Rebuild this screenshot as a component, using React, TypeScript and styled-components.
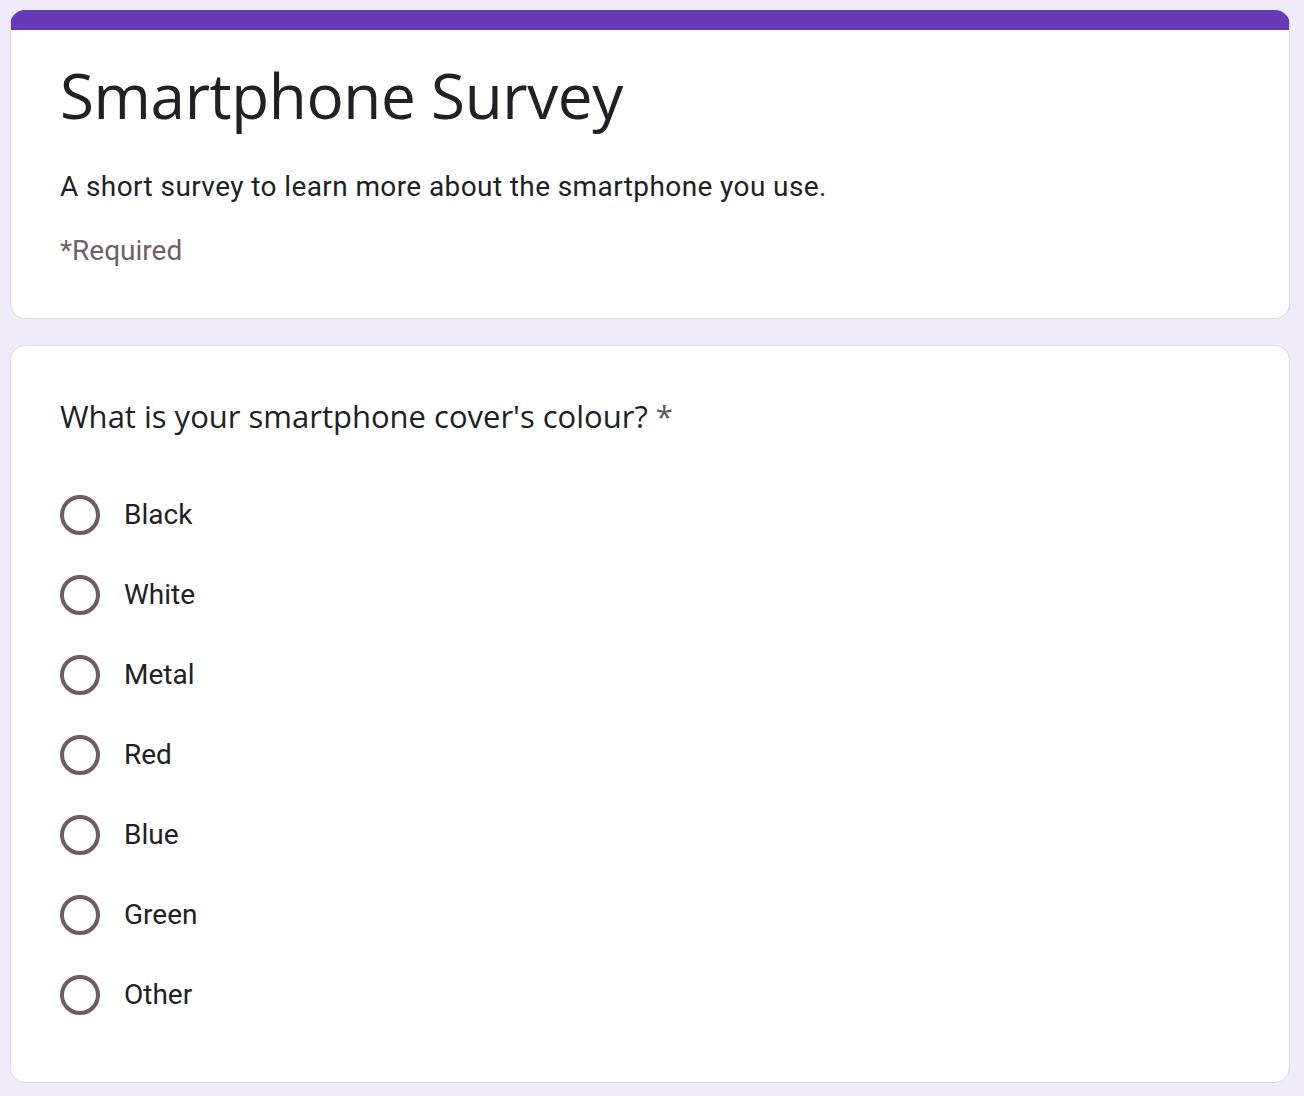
import React, { FC } from 'react';
import styled, { createGlobalStyle } from 'styled-components';

const GlobalStyle = createGlobalStyle`
    html, body {
        margin: 0;
        padding: 0;
        background: #f0ebf8;
    }
    body {
        font-family: Roboto, "Liberation Sans", sans-serif;
        color: #202124;
    }
`;

const options = ['Black', 'White', 'Metal', 'Red', 'Blue', 'Green', 'Other'];

const App: FC = () => {
    return (
        <>
            <GlobalStyle />
            <Page>
                <HeaderCard>
                    <Title>Smartphone Survey</Title>
                    <Description>A short survey to learn more about the smartphone you use.</Description>
                    <RequiredNote>*Required</RequiredNote>
                </HeaderCard>
                <QuestionCard>
                    <Question>
                        What is your smartphone cover's colour? <Star>*</Star>
                    </Question>
                    <Options>
                        {options.map((o) => (
                            <Option key={o}>
                                <Radio />
                                <OptionLabel>{o}</OptionLabel>
                            </Option>
                        ))}
                    </Options>
                </QuestionCard>
            </Page>
        </>
    );
};

export default App;

const Page = styled.div`
    padding: 10px 14px 12px 10px;
    display: flex;
    flex-direction: column;
    gap: 26px;
`;

const Card = styled.section`
    background: white;
    border: 1px solid #dadce0;
    border-radius: 15px;
    padding: 0 49px;
    box-sizing: border-box;
`;

const HeaderCard = styled(Card)`
    border-top: 20px solid #673ab7;
    height: 309px;
    padding-top: 25px;
`;

const Title = styled.h1`
    margin: 0;
    font-family: "Open Sans", Roboto, sans-serif;
    font-weight: 400;
    font-size: 62px;
    line-height: 80px;
    letter-spacing: -0.4px;
`;

const Description = styled.p`
    margin: 32px 0 0;
    font-size: 28px;
    line-height: 40px;
    letter-spacing: 0.4px;
`;

const RequiredNote = styled.div`
    margin-top: 24px;
    font-size: 28px;
    line-height: 40px;
    color: #70606a;
`;

const QuestionCard = styled(Card)`
    padding-top: 48px;
    padding-bottom: 48px;
    height: 738px;
`;

const Question = styled.h2`
    margin: 0;
    font-family: "Open Sans", Roboto, sans-serif;
    font-weight: 400;
    font-size: 31px;
    line-height: 44px;
`;

const Star = styled.span`
    color: #5f5459;
`;

const Options = styled.div`
    margin-top: 57px;
    display: flex;
    flex-direction: column;
    gap: 40px;
`;

const Option = styled.label`
    display: flex;
    align-items: center;
    gap: 24px;
    height: 40px;
`;

const Radio = styled.span`
    width: 40px;
    height: 40px;
    box-sizing: border-box;
    border: 4px solid #6e5c63;
    border-radius: 50%;
    flex-shrink: 0;
`;

const OptionLabel = styled.span`
    font-size: 28px;
    line-height: 40px;
`;
